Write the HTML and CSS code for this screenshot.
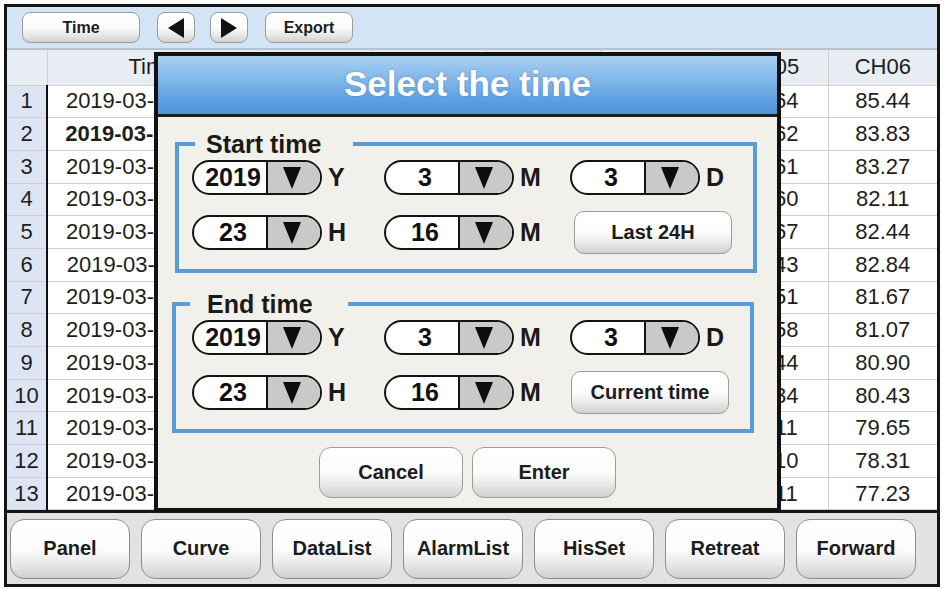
FILE: index.html
```html
<!DOCTYPE html>
<html lang="en">
<head>
    <meta charset="UTF-8">
    <meta name="viewport" content="width=device-width, initial-scale=1.0">
    <title>History Data - Select the time</title>
    <link rel="stylesheet" href="styles.css">
</head>
<body>

<div class="screen">
    <!-- Top toolbar -->
    <div class="toolbar">
        <button class="btn tool-btn time-btn">Time</button>
        <button class="btn tool-btn arrow-btn prev-btn">
            <svg width="18" height="22" viewBox="0 0 18 22"><polygon points="17,1 17,21 1,11"/></svg>
        </button>
        <button class="btn tool-btn arrow-btn next-btn">
            <svg width="18" height="22" viewBox="0 0 18 22"><polygon points="1,1 1,21 17,11"/></svg>
        </button>
        <button class="btn tool-btn export-btn">Export</button>
    </div>

    <!-- Data list -->
    <table class="data">
        <colgroup>
            <col class="col-num">
            <col class="col-time">
            <col class="col-ch"><col class="col-ch"><col class="col-ch"><col class="col-ch"><col class="col-ch">
            <col class="col-last">
        </colgroup>
        <thead>
            <tr>
                <th class="num"></th>
                <th>Time</th>
                <th>CH01</th><th>CH02</th><th>CH03</th><th>CH04</th><th>CH05</th><th>CH06</th>
            </tr>
        </thead>
        <tbody id="rows"></tbody>
    </table>

    <!-- Bottom navigation -->
    <div class="navbar">
        <button class="btn nav-btn">Panel</button>
        <button class="btn nav-btn">Curve</button>
        <button class="btn nav-btn">DataList</button>
        <button class="btn nav-btn">AlarmList</button>
        <button class="btn nav-btn">HisSet</button>
        <button class="btn nav-btn">Retreat</button>
        <button class="btn nav-btn">Forward</button>
    </div>

    <!-- Time select dialog -->
    <div class="dialog">
        <div class="dialog-title">Select the time</div>

        <fieldset class="group group-start">
            <legend>Start time</legend>
            <div class="row">
                <div class="cell c1"><div class="spin"><span class="val">2019</span><span class="drop"><svg width="20" height="24" viewBox="0 0 20 24"><polygon points="1,1 19,1 10,23"/></svg></span></div><span class="unit">Y</span></div>
                <div class="cell c2"><div class="spin"><span class="val">3</span><span class="drop"><svg width="20" height="24" viewBox="0 0 20 24"><polygon points="1,1 19,1 10,23"/></svg></span></div><span class="unit">M</span></div>
                <div class="cell c3"><div class="spin"><span class="val">3</span><span class="drop"><svg width="20" height="24" viewBox="0 0 20 24"><polygon points="1,1 19,1 10,23"/></svg></span></div><span class="unit">D</span></div>
            </div>
            <div class="row row-2">
                <div class="cell c1"><div class="spin"><span class="val">23</span><span class="drop"><svg width="20" height="24" viewBox="0 0 20 24"><polygon points="1,1 19,1 10,23"/></svg></span></div><span class="unit">H</span></div>
                <div class="cell c2"><div class="spin"><span class="val">16</span><span class="drop"><svg width="20" height="24" viewBox="0 0 20 24"><polygon points="1,1 19,1 10,23"/></svg></span></div><span class="unit">M</span></div>
                <div class="cell c3"><button class="btn quick-btn">Last 24H</button></div>
            </div>
        </fieldset>

        <fieldset class="group group-end">
            <legend>End time</legend>
            <div class="row">
                <div class="cell c1"><div class="spin"><span class="val">2019</span><span class="drop"><svg width="20" height="24" viewBox="0 0 20 24"><polygon points="1,1 19,1 10,23"/></svg></span></div><span class="unit">Y</span></div>
                <div class="cell c2"><div class="spin"><span class="val">3</span><span class="drop"><svg width="20" height="24" viewBox="0 0 20 24"><polygon points="1,1 19,1 10,23"/></svg></span></div><span class="unit">M</span></div>
                <div class="cell c3"><div class="spin"><span class="val">3</span><span class="drop"><svg width="20" height="24" viewBox="0 0 20 24"><polygon points="1,1 19,1 10,23"/></svg></span></div><span class="unit">D</span></div>
            </div>
            <div class="row row-2">
                <div class="cell c1"><div class="spin"><span class="val">23</span><span class="drop"><svg width="20" height="24" viewBox="0 0 20 24"><polygon points="1,1 19,1 10,23"/></svg></span></div><span class="unit">H</span></div>
                <div class="cell c2"><div class="spin"><span class="val">16</span><span class="drop"><svg width="20" height="24" viewBox="0 0 20 24"><polygon points="1,1 19,1 10,23"/></svg></span></div><span class="unit">M</span></div>
                <div class="cell c3"><button class="btn quick-btn">Current time</button></div>
            </div>
        </fieldset>

        <div class="dialog-actions">
            <button class="btn action-btn">Cancel</button>
            <button class="btn action-btn">Enter</button>
        </div>
    </div>
</div>

<script>
    // history records shown in the list
    const records = [
        ["2019-03-03 23:16", "84.12", "83.95", "84.30", "85.02", "84.64", "85.44"],
        ["2019-03-03 23:15", "83.80", "83.61", "83.97", "84.70", "84.62", "83.83"],
        ["2019-03-03 23:14", "83.52", "83.40", "83.71", "84.33", "84.61", "83.27"],
        ["2019-03-03 23:13", "82.90", "82.77", "83.05", "83.88", "83.60", "82.11"],
        ["2019-03-03 23:12", "82.66", "82.41", "82.80", "83.51", "83.67", "82.44"],
        ["2019-03-03 23:11", "82.31", "82.18", "82.49", "83.20", "83.43", "82.84"],
        ["2019-03-03 23:10", "81.95", "81.83", "82.10", "82.76", "82.51", "81.67"],
        ["2019-03-03 23:09", "81.60", "81.47", "81.72", "82.39", "82.58", "81.07"],
        ["2019-03-03 23:08", "81.22", "81.05", "81.40", "82.01", "81.44", "80.90"],
        ["2019-03-03 23:07", "80.87", "80.70", "81.03", "81.66", "81.34", "80.43"],
        ["2019-03-03 23:06", "80.41", "80.28", "80.59", "81.20", "80.11", "79.65"],
        ["2019-03-03 23:05", "79.93", "79.80", "80.12", "80.74", "79.10", "78.31"],
        ["2019-03-03 23:04", "79.40", "79.26", "79.58", "80.21", "78.11", "77.23"]
    ];

    const tbody = document.getElementById("rows");
    records.forEach((rec, i) => {
        const tr = document.createElement("tr");
        if (i === 1) tr.classList.add("selected");
        let html = '<td class="num">' + (i + 1) + '</td>';
        rec.forEach((v, j) => {
            html += '<td' + (j === 0 ? ' class="time"' : '') + '>' + v + '</td>';
        });
        tr.innerHTML = html;
        tbody.appendChild(tr);
    });
</script>

</body>
</html>
```

FILE: styles.css
```css
body {
    margin: 0;
    background-color: #fff;
    font-family: 'Liberation Sans', Arial, sans-serif;
    color: #1e1e1e;
}

.screen {
    position: relative;
    width: 930px;
    margin: 4px 0 0 4px;
    border: 3px solid #151515;
    background-color: #fff;
}

/* generic glossy button */
.btn {
    font-family: inherit;
    font-weight: bold;
    color: #1c1c1c;
    padding: 0;
    border: 1.5px solid #9c9c9c;
    border-radius: 10px;
    background: linear-gradient(to bottom, #ffffff 0%, #fcfcfc 50%, #e6e6e6 78%, #d0d0d0 100%);
    cursor: pointer;
    display: flex;
    align-items: center;
    justify-content: center;
    box-sizing: border-box;
}

/* toolbar */
.toolbar {
    height: 41px;
    display: flex;
    align-items: center;
    padding-left: 15px;
    background-color: #d3e5f4;
    border-bottom: 2px solid #b8c3ce;
}

.tool-btn {
    height: 31px;
    font-size: 16px;
    border-radius: 8px;
}

.time-btn {
    width: 118px;
}

.arrow-btn {
    width: 38px;
    margin-left: 15px;
}

.prev-btn {
    margin-left: 17px;
}

.arrow-btn svg polygon {
    fill: #111;
}

.export-btn {
    width: 88px;
    margin-left: 17px;
}

/* data table */
.data {
    width: 930px;
    table-layout: fixed;
    border-collapse: collapse;
    font-size: 22px;
}

.col-num { width: 40px; }
.col-time { width: 211px; }
.col-ch { width: 114px; }
.col-last { width: 109px; }

.data th,
.data td {
    padding: 0;
    text-align: center;
    white-space: nowrap;
    overflow: hidden;
    font-weight: normal;
    border: 1px solid #cfcfcf;
}

.data thead tr {
    height: 35px;
}

.data th {
    background-color: #e8ecf3;
    border-top: none;
}

.data tbody tr {
    height: 32.7px;
}

.data td.num {
    background-color: #dde5f5;
    border-right: 2px solid #111;
}

.data th:first-child,
.data td:first-child {
    border-left: none;
}

.data th:last-child,
.data td:last-child {
    border-right: none;
}

.data tr.selected td.time {
    font-weight: bold;
}

/* bottom navigation */
.navbar {
    height: 71px;
    display: flex;
    align-items: center;
    gap: 11px;
    padding-left: 3px;
    background-color: #e2e2e2;
    border-top: 3px solid #151515;
}

.nav-btn {
    width: 120px;
    height: 60px;
    font-size: 20px;
    border-radius: 14px;
    border-color: #8e8e8e;
}

/* dialog */
.dialog {
    position: absolute;
    left: 147px;
    top: 45px;
    width: 627px;
    height: 460px;
    box-sizing: border-box;
    border: 4px solid #121212;
    background-color: #f2f0eb;
}

.dialog-title {
    height: 58px;
    line-height: 56px;
    text-align: center;
    font-size: 35px;
    font-weight: bold;
    color: #fff;
    text-shadow: 0 0 2px rgba(40, 90, 150, 0.6);
    background: linear-gradient(to bottom, #aad0f1 0%, #82b7ea 40%, #5a9de0 80%, #4d93da 100%);
    border-bottom: 3px solid #1d1d1d;
}

.group {
    margin: 13px 20px 0 17px;
    padding: 2px 0 15px 13px;
    border: 4px solid #5b9bd6;
}

.group-end {
    margin: 17px 23px 0 14px;
    padding-left: 16px;
}

.group legend {
    width: 158px;
    box-sizing: border-box;
    margin-left: 3px;
    padding: 0 0 0 11px;
    font-size: 25px;
    line-height: 28px;
    font-weight: bold;
    color: #1a1a1a;
}

.group-end legend {
    margin-left: -2px;
    padding-left: 17px;
}

.row {
    display: flex;
    align-items: center;
    height: 35px;
}

.row-2 {
    height: 43px;
    margin-top: 16px;
}

.cell {
    display: flex;
    align-items: center;
}

.c1 { width: 192px; }
.c2 { width: 186px; }

.spin {
    width: 130px;
    height: 35px;
    box-sizing: border-box;
    display: flex;
    border: 2.5px solid #141414;
    border-radius: 18px;
    overflow: hidden;
    background-color: #fff;
}

.spin .val {
    flex: 1;
    padding-left: 6px;
    text-align: center;
    font-size: 25px;
    font-weight: bold;
    line-height: 30px;
    color: #111;
}

.spin .drop {
    width: 48px;
    display: flex;
    align-items: center;
    justify-content: center;
    padding-right: 4px;
    border-left: 2px solid #141414;
    background-color: #c9c9c9;
}

.spin .drop polygon {
    fill: #0d0d0d;
}

.unit {
    margin-left: 6px;
    font-size: 25px;
    font-weight: bold;
    color: #1a1a1a;
}

.quick-btn {
    width: 158px;
    height: 43px;
    margin-left: 4px;
    font-size: 20px;
}

.group-end .quick-btn {
    margin-left: 1px;
}

.dialog-actions {
    display: flex;
    justify-content: center;
    gap: 9px;
    margin-top: 14px;
}

.action-btn {
    width: 144px;
    height: 51px;
    font-size: 20px;
    border-radius: 12px;
}
```
